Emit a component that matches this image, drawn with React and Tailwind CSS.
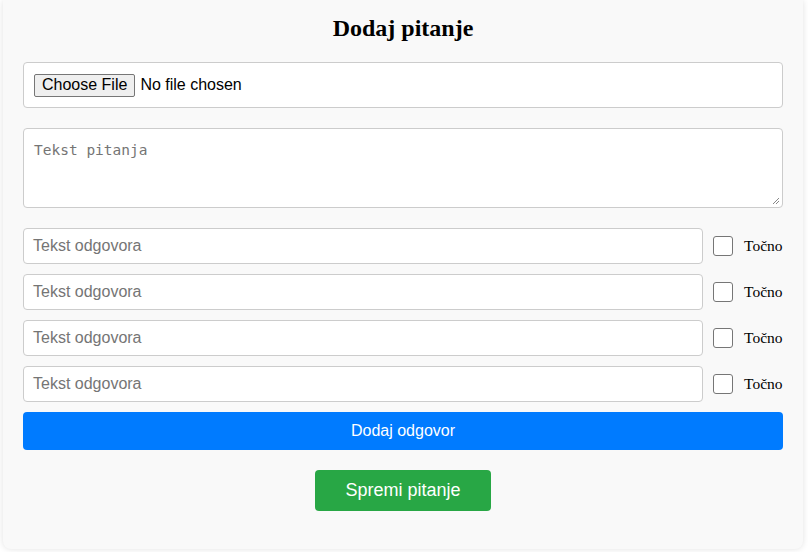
export default function App() {
  const rows = [0, 1, 2, 3];
  return (
    <div className="min-h-[552px] bg-white" style={{ fontFamily: '"Liberation Sans", Arial, sans-serif' }}>
      <div className="ml-[3px] w-[800px] h-[549px] bg-[#f9f9f9] rounded-b-[8px] shadow-[0_0_6px_rgba(0,0,0,0.12)] px-[20px] pt-[14px] flex flex-col">
        <h2
          className="text-center text-[24px] font-bold text-black leading-[28px] mb-[20px]"
          style={{ fontFamily: '"Liberation Serif", "Times New Roman", serif' }}
        >
          Dodaj pitanje
        </h2>

        <div className="h-[46px] bg-white border border-[#ccc] rounded-[4px] flex items-center px-[10px]">
          <span className="h-[23px] px-[7px] flex items-center bg-[#efefef] border border-[#767676] rounded-[2px] text-[16px] text-black leading-none">
            Choose File
          </span>
          <span className="ml-[5px] text-[16px] text-black">No file chosen</span>
        </div>

        <div className="relative mt-[20px] h-[80px] bg-white border border-[#ccc] rounded-[4px] px-[10px] pt-[9px]">
          <span
            className="text-[14.5px] text-[#757575]"
            style={{ fontFamily: '"DejaVu Sans Mono", "Liberation Mono", monospace' }}
          >
            Tekst pitanja
          </span>
          <svg className="absolute right-[2px] bottom-[2px]" width="8" height="8" viewBox="0 0 8 8">
            <path d="M7 1 L1 7 M7 4 L4 7" stroke="#888" strokeWidth="1" fill="none" />
          </svg>
        </div>

        <div className="mt-[20px] flex flex-col gap-[10px]">
          {rows.map((i) => (
            <div key={i} className="flex items-center">
              <div className="w-[680px] h-[36px] bg-white border border-[#ccc] rounded-[4px] flex items-center px-[9px] text-[16px] text-[#757575]">
                Tekst odgovora
              </div>
              <div className="ml-[10px] w-[20px] h-[20px] bg-white border border-[#767676] rounded-[3px]" />
              <span
                className="ml-[11px] text-[15.5px] text-black"
                style={{ fontFamily: '"Liberation Serif", "Times New Roman", serif' }}
              >
                Točno
              </span>
            </div>
          ))}
        </div>

        <div className="mt-[10px] h-[38px] bg-[#007bff] rounded-[4px] flex items-center justify-center text-white text-[16px]">
          Dodaj odgovor
        </div>

        <div className="mt-[20px] flex justify-center">
          <div className="w-[176px] h-[41px] bg-[#28a745] rounded-[4px] flex items-center justify-center text-white text-[18px]">
            Spremi pitanje
          </div>
        </div>
      </div>
    </div>
  );
}
